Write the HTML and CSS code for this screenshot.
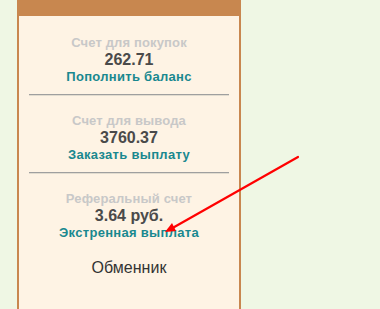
FILE: index.html
```html
<!DOCTYPE html>
<html lang="ru">
<head>
<meta charset="utf-8">
<title>Счета</title>
<link rel="stylesheet" href="styles.css">
</head>
<body>
<div class="page">
  <div class="panel">
    <div class="panel-head"></div>
    <div class="panel-body">
      <div class="account">
        <div class="label">Счет для покупок</div>
        <div class="value">262.71</div>
        <a class="link" href="#">Пополнить баланс</a>
      </div>
      <hr class="divider">
      <div class="account">
        <div class="label">Счет для вывода</div>
        <div class="value">3760.37</div>
        <a class="link" href="#">Заказать выплату</a>
      </div>
      <hr class="divider">
      <div class="account">
        <div class="label">Реферальный счет</div>
        <div class="value">3.64 руб.</div>
        <a class="link" href="#">Экстренная выплата</a>
      </div>
      <div class="exchange">Обменник</div>
    </div>
  </div>
  <svg class="arrow" width="380" height="309" viewBox="0 0 380 309">
    <line x1="298" y1="157" x2="169" y2="230" stroke="#ff0000" stroke-width="2.2" stroke-linecap="round"/>
    <polygon points="165,232 176,231 172,223" fill="#ff0000"/>
  </svg>
</div>
</body>
</html>
```
FILE: styles.css
```css
html, body {
  margin: 0;
  padding: 0;
  background: #eff7e4;
  height: 100%;
  overflow: hidden;
}
.page {
  position: relative;
  width: 380px;
  height: 309px;
  overflow: hidden;
  font-family: "Liberation Sans", Arial, sans-serif;
}
.panel {
  box-sizing: border-box;
  margin-left: 17px;
  width: 224px;
  height: 309px;
  border: 2px solid #c8874f;
  border-top: 0;
  border-bottom: 0;
  background: #fef3e4;
}
.panel-head {
  height: 16px;
  background: #c8874f;
}
.panel-body {
  padding-top: 18px;
  text-align: center;
}
.account {
  display: flex;
  flex-direction: column;
  align-items: center;
}
.label {
  font-size: 13px;
  font-weight: bold;
  color: #c8c8c8;
  line-height: 17px;
  letter-spacing: 0.15px;
}
.value {
  font-size: 16px;
  font-weight: bold;
  color: #4a4a4a;
  line-height: 17px;
}
.link {
  font-size: 13px;
  font-weight: bold;
  color: #19888f;
  line-height: 17px;
  letter-spacing: 0.3px;
  text-decoration: none;
}
.divider {
  margin: 9px 10px 16px;
  height: 0;
  border: 0;
  border-top: 1px solid #9f9f9f;
  border-bottom: 1px solid #e2dccf;
}
.exchange {
  margin-top: 17px;
  font-size: 16px;
  line-height: 20px;
  color: #333333;
}
.arrow {
  position: absolute;
  left: 0;
  top: 0;
  pointer-events: none;
}
```
